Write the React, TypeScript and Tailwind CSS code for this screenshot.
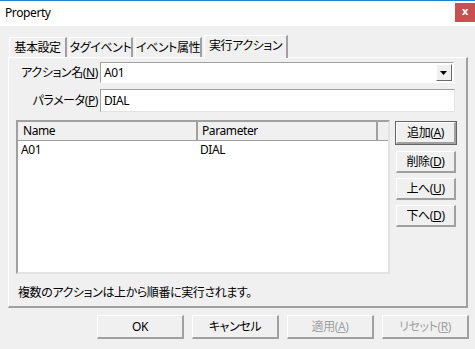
const font = "font-['Noto_Sans','Noto_Sans_CJK_JP',sans-serif] [font-feature-settings:'palt']";

function Btn({
  children,
  disabled,
  primary,
  className = "",
}: {
  children: React.ReactNode;
  disabled?: boolean;
  primary?: boolean;
  className?: string;
}) {
  return (
    <div
      className={`flex items-center justify-center bg-[#f0f0f0] text-[12px] ${
        primary ? "border border-[#646464]" : "border border-transparent"
      } ${disabled ? "text-[#a0a0a0]" : "text-black"} ${className}`}
    >
      <div className="flex h-full w-full items-center justify-center whitespace-nowrap border-t border-l border-r-2 border-b-2 border-t-white border-l-white border-r-[#a0a0a0] border-b-[#a0a0a0]">
        {children}
      </div>
    </div>
  );
}

function Tab({ label, width, selected }: { label: string; width: string; selected?: boolean }) {
  if (selected) {
    return (
      <div
        className={`relative z-10 -mb-[1px] flex h-[23px] items-center justify-center whitespace-nowrap border-t border-l border-r-2 border-t-white border-l-white border-r-[#a0a0a0] bg-[#f0f0f0] pb-[2px] text-[12px] ${width}`}
      >
        {label}
      </div>
    );
  }
  return (
    <div
      className={`flex h-[20px] items-center justify-center whitespace-nowrap border-t border-l border-r-2 border-t-white border-l-white border-r-[#a0a0a0] text-[12px] ${width}`}
    >
      {label}
    </div>
  );
}

export default function App() {
  return (
    <div className={`flex h-[349px] w-[475px] flex-col bg-[#f0f0f0] tracking-[-0.4px] text-black ${font}`}>
      {/* title bar */}
      <div className="flex h-[26px] items-start border-t border-t-[#1883d7] bg-white">
        <span className="pl-[5px] pt-[3px] text-[12px]">Property</span>
        <div className="ml-auto mt-[2px] flex h-[19px] w-[20px] items-center justify-center bg-[#c75050] pb-[2px] text-[11px] font-bold text-white">
          x
        </div>
      </div>

      {/* tabs */}
      <div className="flex items-end gap-[2px] pl-[9px] pt-[9px]">
        <Tab label="基本設定" width="w-[58px]" />
        <Tab label="タグイベント" width="w-[64px]" />
        <Tab label="イベント属性" width="w-[67px]" />
        <Tab label="実行アクション" width="w-[84px]" selected />
      </div>

      {/* panel */}
      <div className="ml-[8px] h-[251px] w-[460px] border-t border-l border-r-2 border-b-2 border-t-white border-l-white border-r-[#a0a0a0] border-b-[#a0a0a0] px-[7px] pt-[4px] text-[12px]">
        <div className="flex h-[21px] items-center">
          <span className="w-[82px] whitespace-nowrap text-right">
            アクション名(<u>N</u>)
          </span>
          <div className="ml-[2px] flex h-[21px] w-[354px] items-center border border-t-[#a0a0a0] border-l-[#a0a0a0] border-r-white border-b-white bg-white">
            <span className="pl-[3px]">A01</span>
            <div className="ml-auto mr-[1px] flex h-[17px] w-[16px] items-center justify-center border border-t-white border-l-white border-r-[#696969] border-b-[#696969] bg-[#f0f0f0]">
              <svg width="8" height="4" viewBox="0 0 8 4">
                <path d="M0 0h7L3.5 4z" fill="#000" />
              </svg>
            </div>
          </div>
        </div>

        <div className="mt-[6px] flex h-[23px] items-center">
          <span className="w-[82px] whitespace-nowrap text-right">
            パラメータ(<u>P</u>)
          </span>
          <div className="ml-[2px] flex h-[23px] w-[355px] items-center border border-t-[#a0a0a0] border-l-[#a0a0a0] border-r-[#e3e3e3] border-b-[#e3e3e3] bg-white">
            <span className="pl-[3px]">DIAL</span>
          </div>
        </div>

        <div className="mt-[8px] flex">
          {/* list */}
          <div className="flex h-[154px] w-[374px] flex-col border-2 border-t-[#a0a0a0] border-l-[#a0a0a0] border-r-[#e3e3e3] border-b-[#e3e3e3] bg-white">
            <div className="flex h-[19px] bg-[#f0f0f0]">
              <div className="flex w-[180px] items-center border-r-2 border-b border-r-[#a0a0a0] border-b-[#a0a0a0] pl-[5px]">
                Name
              </div>
              <div className="flex w-[180px] items-center border-r-2 border-b border-r-[#a0a0a0] border-b-[#a0a0a0] pl-[4px]">
                Parameter
              </div>
              <div className="flex-1 border-b border-b-[#a0a0a0]" />
            </div>
            <div className="flex h-[18px] items-center">
              <span className="w-[182px] pl-[3px]">A01</span>
              <span>DIAL</span>
            </div>
          </div>

          {/* side buttons */}
          <div className="ml-[5px] flex w-[62px] flex-col gap-[3px] pt-[1px]">
            <Btn primary className="h-[24px]">
              追加(<u>A</u>)
            </Btn>
            <Btn className="mt-[2px] h-[24px]">
              削除(<u>D</u>)
            </Btn>
            <Btn className="h-[24px]">
              上へ(<u>U</u>)
            </Btn>
            <Btn className="h-[24px]">
              下へ(<u>D</u>)
            </Btn>
          </div>
        </div>

        <div className="mt-[10px] whitespace-nowrap pl-[2px]">複数のアクションは上から順番に実行されます。</div>
      </div>

      {/* bottom buttons */}
      <div className="mt-[6px] flex gap-[6px] pl-[96px]">
        <Btn className="h-[26px] w-[89px]">OK</Btn>
        <Btn className="h-[26px] w-[89px]">キャンセル</Btn>
        <Btn disabled className="h-[26px] w-[89px]">
          適用(<u>A</u>)
        </Btn>
        <Btn disabled className="h-[26px] w-[89px]">
          リセット(<u>R</u>)
        </Btn>
      </div>
    </div>
  );
}
